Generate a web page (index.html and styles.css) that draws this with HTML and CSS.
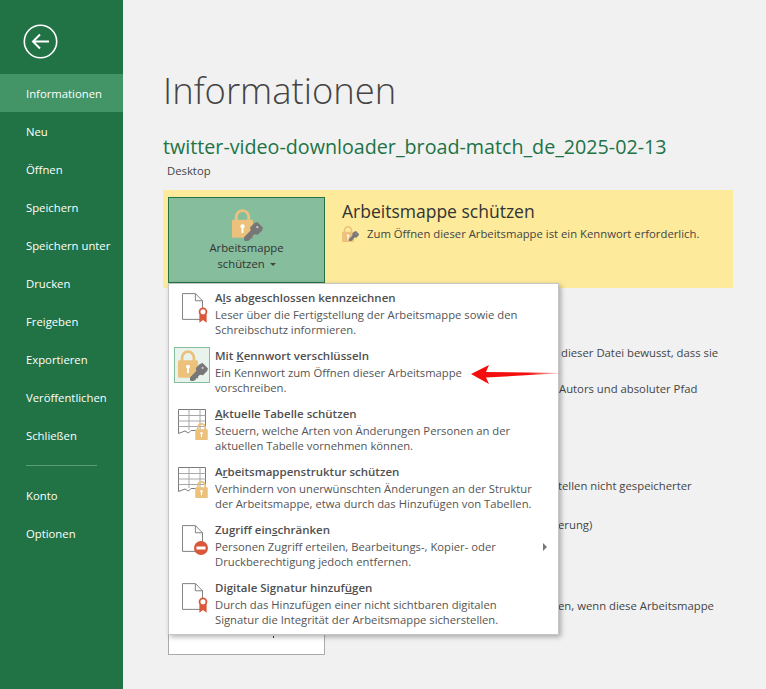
FILE: index.html
```html
<!DOCTYPE html>
<html>
<head>
  <title>Informationen</title>
  <link rel="stylesheet" href="styles.css">
</head>
<body>
  <svg class="defs" width="0" height="0">
    <symbol id="lock" viewBox="0 0 22 30">
      <path d="M4.5 12V8a6.5 6.5 0 0 1 13 0v4" fill="none" stroke="#ebc17b" stroke-width="3"/>
      <rect x="0" y="11" width="22" height="19" rx="1.5" fill="#ebc17b"/>
      <circle cx="11" cy="18" r="2.2" fill="#fff"/>
      <rect x="10" y="19" width="2" height="6" fill="#fff"/>
    </symbol>
    <symbol id="key" viewBox="0 0 20 20">
      <path d="M0 16 7 9 6.5 5.5 11 1 14 0 20 6 19 9 14.5 13.500 11 13 9 15 9 17 7 17 6 19 4 20 1 20 0 19Z" fill="#777"/>
      <circle cx="14" cy="5.500" r="1.200" fill="#ccc"/>
    </symbol>
    <symbol id="doc" viewBox="0 0 22 28">
      <path d="M.5.5H14L21.5 8V27.5H.5Z" fill="#fff" stroke="#7b7b7b"/>
      <path d="M14 .5V8H21.5" fill="none" stroke="#7b7b7b"/>
    </symbol>
    <symbol id="ribbon" viewBox="0 0 11 17">
      <path d="M1.5 8V17L5.5 14 9.5 17V8Z" fill="#d9583b"/>
      <circle cx="5.5" cy="5" r="3.8" fill="#fff" stroke="#d9583b" stroke-width="2"/>
    </symbol>
    <symbol id="sheet" viewBox="0 0 28 26">
      <path d="M.5 .5H27.5V21.5H13L10.5 24 7 22 .5 24.5Z" fill="#fff" stroke="#7b7b7b"/>
      <path d="M11 .5V21M22 .5V21M.5 6.5H27.5M.5 12H27.5M.5 17.5H27.5" fill="none" stroke="#a8a8a8"/>
    </symbol>
  </svg>

  <div class="app">
    <nav class="sidebar">
      <div class="back">
        <svg width="36" height="36" viewBox="0 0 36 36">
          <circle cx="17.5" cy="17.5" r="16.2" fill="none" stroke="#fff" stroke-width="1.6"/>
          <path d="M10 17.5H26M17 10.5 10 17.5 17 24.5" fill="none" stroke="#fff" stroke-width="2"/>
        </svg>
      </div>
      <ul class="nav-list nav-main">
        <li class="active">Informationen</li>
        <li>Neu</li>
        <li>Öffnen</li>
        <li>Speichern</li>
        <li>Speichern unter</li>
        <li>Drucken</li>
        <li>Freigeben</li>
        <li>Exportieren</li>
        <li>Veröffentlichen</li>
        <li>Schließen</li>
      </ul>
      <div class="nav-divider"></div>
      <ul class="nav-list">
        <li>Konto</li>
        <li>Optionen</li>
      </ul>
    </nav>

    <main class="content">
      <h1>Informationen</h1>
      <h2>twitter-video-downloader_broad-match_de_2025-02-13</h2>
      <div class="location">Desktop</div>

      <section class="banner">
        <div class="big-button active-button">
          <span class="big-icon">
            <svg class="big-lock" width="21" height="29"><use href="#lock"/></svg>
            <svg class="big-key" width="19" height="19"><use href="#key"/></svg>
          </span>
          <span>Arbeitsmappe<br>schützen <i class="caret"></i></span>
        </div>
        <div class="banner-text">
          <h3>Arbeitsmappe schützen</h3>
          <p>
            <span class="small-icon">
              <svg class="small-lock" width="12" height="16"><use href="#lock"/></svg>
              <svg class="small-key" width="10" height="10"><use href="#key"/></svg>
            </span>
            Zum Öffnen dieser Arbeitsmappe ist ein Kennwort erforderlich.
          </p>
        </div>
      </section>

      <section class="details details-a">
        <p>dieser Datei bewusst, dass sie</p>
        <p class="gap-19 shift-left">Autors und absoluter Pfad</p>
      </section>
      <section class="details details-b">
        <p class="shift-left-2">tellen nicht gespeicherter</p>
        <p class="gap-22 shift-left-2">erung)</p>
      </section>
      <section class="last-section">
        <div class="big-button plain-button"><i class="tick"></i></div>
        <p>en, wenn diese Arbeitsmappe</p>
      </section>
    </main>

    <div class="menu">
      <div class="menu-item">
        <span class="menu-icon">
          <svg class="icon-doc" width="21" height="27"><use href="#doc"/></svg>
          <svg class="icon-ribbon" width="10" height="16"><use href="#ribbon"/></svg>
        </span>
        <div class="menu-text">
          <strong>A<u>l</u>s abgeschlossen kennzeichnen</strong>
          <p>Leser über die Fertigstellung der Arbeitsmappe sowie den<br>Schreibschutz informieren.</p>
        </div>
      </div>
      <div class="menu-item">
        <span class="menu-icon selected">
          <svg class="icon-lock" width="20" height="28"><use href="#lock"/></svg>
          <svg class="icon-key" width="18" height="18"><use href="#key"/></svg>
        </span>
        <div class="menu-text">
          <strong>Mit <u>K</u>ennwort verschlüsseln</strong>
          <p>Ein Kennwort zum Öffnen dieser Arbeitsmappe<br>vorschreiben.</p>
        </div>
      </div>
      <div class="menu-item">
        <span class="menu-icon">
          <svg class="icon-sheet" width="28" height="26"><use href="#sheet"/></svg>
          <svg class="icon-sheet-lock" width="13" height="17"><use href="#lock"/></svg>
        </span>
        <div class="menu-text">
          <strong><u>A</u>ktuelle Tabelle schützen</strong>
          <p>Steuern, welche Arten von Änderungen Personen an der<br>aktuellen Tabelle vornehmen können.</p>
        </div>
      </div>
      <div class="menu-item">
        <span class="menu-icon">
          <svg class="icon-sheet" width="28" height="26"><use href="#sheet"/></svg>
          <svg class="icon-sheet-lock" width="13" height="17"><use href="#lock"/></svg>
        </span>
        <div class="menu-text">
          <strong>A<u>r</u>beitsmappenstruktur schützen</strong>
          <p>Verhindern von unerwünschten Änderungen an der Struktur<br>der Arbeitsmappe, etwa durch das Hinzufügen von Tabellen.</p>
        </div>
      </div>
      <div class="menu-item">
        <span class="menu-icon">
          <svg class="icon-doc" width="21" height="27"><use href="#doc"/></svg>
          <svg class="icon-stop" width="14" height="14" viewBox="0 0 14 14">
            <circle cx="7" cy="7" r="7" fill="#d9583b"/>
            <rect x="2.5" y="5.5" width="9" height="3" fill="#fff"/>
          </svg>
        </span>
        <div class="menu-text">
          <strong>Zugriff ein<u>s</u>chränken</strong>
          <p>Personen Zugriff erteilen, Bearbeitungs-, Kopier- oder<br>Druckberechtigung jedoch entfernen.</p>
        </div>
        <i class="submenu-arrow"></i>
      </div>
      <div class="menu-item">
        <span class="menu-icon">
          <svg class="icon-doc" width="21" height="27"><use href="#doc"/></svg>
          <svg class="icon-ribbon" width="10" height="16"><use href="#ribbon"/></svg>
        </span>
        <div class="menu-text">
          <strong>Digitale Signatur hinzuf<u>ü</u>gen</strong>
          <p>Durch das Hinzufügen einer nicht sichtbaren digitalen<br>Signatur die Integrität der Arbeitsmappe sicherstellen.</p>
        </div>
      </div>
    </div>

    <svg class="red-arrow" width="96" height="22" viewBox="0 0 96 22">
      <defs>
        <linearGradient id="fade" x1="0" x2="1" y1="0" y2="0">
          <stop offset="0.6" stop-color="#f40d0d"/>
          <stop offset="1" stop-color="#f40d0d" stop-opacity="0.1"/>
        </linearGradient>
      </defs>
      <path d="M1 11 19 2 16 9 95 10 16 14.5 19 21Z" fill="url(#fade)"/>
    </svg>
  </div>
</body>
</html>
```

FILE: styles.css
```css
html, body {
  margin: 0;
  padding: 0;
}
body {
  font-family: "Open Sans", "Noto Sans", sans-serif;
  color: #444;
  background-color: #f1f1f1;
  overflow: hidden;
}
.defs {
  position: absolute;
}
.app {
  position: relative;
  display: flex;
  width: 766px;
  height: 689px;
  overflow: hidden;
}

/* sidebar */
.sidebar {
  flex: 0 0 123px;
  background-color: #217346;
  color: #fff;
  font-size: 11.3px;
}
.back {
  height: 74px;
  padding: 24px 0 0 23px;
  box-sizing: border-box;
}
.nav-list {
  list-style: none;
  margin: 0;
  padding: 0;
}
.nav-list li {
  height: 38px;
  line-height: 38px;
  padding-left: 26px;
}
.nav-main li {
  line-height: 40px;
}
.nav-list li.active {
  background-color: #439467;
}
.nav-divider {
  width: 71px;
  height: 1px;
  margin: 11px 0 11px 26px;
  background-color: #5c9d79;
}

/* main column */
.content {
  flex: 1;
  padding-left: 40px;
}
h1 {
  margin: 67px 0 0 0;
  font-size: 36.4px;
  line-height: 46px;
  font-weight: 300;
  color: #444;
}
h2 {
  margin: 21px 0 0 0;
  font-size: 19.7px;
  line-height: 26px;
  font-weight: 400;
  color: #217346;
}
.location {
  margin: 3px 0 0 4px;
  font-size: 11.3px;
  line-height: 16px;
}
.banner {
  display: flex;
  width: 570px;
  height: 98px;
  margin-top: 11px;
  padding: 7px 0 0 5px;
  box-sizing: border-box;
  background-color: #fdea9b;
}
.big-button {
  flex: 0 0 157px;
  box-sizing: border-box;
  width: 157px;
  height: 86px;
  font-size: 11.3px;
  line-height: 16px;
  color: #333;
  text-align: center;
}
.active-button {
  background-color: #86bd9c;
  border: 1px solid #217346;
}
.big-icon {
  display: block;
  position: relative;
  height: 42px;
}
.big-lock {
  position: absolute;
  left: 63px;
  top: 11px;
}
.big-key {
  position: absolute;
  left: 75px;
  top: 24px;
}
.caret {
  display: inline-block;
  margin-left: 2px;
  vertical-align: middle;
  border: 3px solid transparent;
  border-top-color: #444;
  border-bottom: 0;
}
.banner-text {
  margin-left: 17px;
}
h3 {
  margin: 2px 0 0 0;
  font-size: 17.5px;
  line-height: 24px;
  font-weight: 400;
  color: #333;
}
.banner-text p {
  display: flex;
  align-items: center;
  margin: 3px 0 0 0;
  font-size: 11.3px;
  line-height: 16px;
}
.small-icon {
  position: relative;
  flex: 0 0 25px;
  height: 16px;
}
.small-lock {
  position: absolute;
  left: 0;
  top: 0;
}
.small-key {
  position: absolute;
  left: 7px;
  top: 5px;
}

/* text rows that stick out from under the menu */
.details {
  margin-left: 398px;
  font-size: 11.3px;
  line-height: 16px;
}
.details p,
.last-section p {
  margin: 0;
  white-space: nowrap;
}
.details-a {
  margin-top: 57px;
}
.details-b {
  margin-top: 81px;
}
.gap-19 {
  margin-top: 20px !important;
}
.gap-22 {
  margin-top: 23px !important;
}
.shift-left {
  margin-left: -2px !important;
}
.shift-left-2 {
  margin-left: -3px !important;
}
.last-section {
  display: flex;
  margin-top: 36px;
  margin-left: 5px;
  font-size: 11.3px;
  line-height: 16px;
}
.plain-button {
  position: relative;
  background-color: #fff;
  border: 1px solid #ababab;
}
.last-section p {
  margin: 29px 0 0 233px;
}
.tick {
  position: absolute;
  left: 104px;
  top: 66px;
  width: 1px;
  height: 2px;
  background-color: #333;
}

/* dropdown over the page */
.menu {
  position: absolute;
  left: 168px;
  top: 283px;
  box-sizing: border-box;
  width: 391px;
  height: 352px;
  padding-top: 5px;
  background-color: #fff;
  border: 1px solid #c6c6c6;
  box-shadow: 2px 2px 5px rgba(0,0,0,0.3);
}
.menu-item {
  position: relative;
  display: flex;
  height: 58px;
  font-size: 11.25px;
  line-height: 15px;
}
.menu-icon {
  position: relative;
  flex: 0 0 36px;
  height: 36px;
  margin-left: 5px;
  box-sizing: border-box;
}
.menu-icon.selected {
  background-color: #e8f3ec;
  border: 1px solid #86bd9c;
}
.menu-text {
  margin-left: 5px;
  width: 330px;
}
.menu-text strong {
  display: block;
  font-size: 11.5px;
  line-height: 17px;
  font-weight: 600;
  color: #505050;
}
.menu-text p {
  margin: 1px 0 0 0;
  color: #555;
}
.icon-doc {
  position: absolute;
  left: 8px;
  top: 4px;
}
.icon-ribbon {
  position: absolute;
  left: 24px;
  top: 18px;
}
.icon-stop {
  position: absolute;
  left: 20px;
  top: 20px;
}
.icon-lock {
  position: absolute;
  left: 3px;
  top: 2px;
}
.icon-key {
  position: absolute;
  left: 15px;
  top: 15px;
}
.icon-sheet {
  position: absolute;
  left: 4px;
  top: 4px;
}
.icon-sheet-lock {
  position: absolute;
  left: 21px;
  top: 18px;
}
.submenu-arrow {
  position: absolute;
  left: 374px;
  top: 22px;
  border: 4px solid transparent;
  border-left-color: #777;
  border-right: 0;
}
.red-arrow {
  position: absolute;
  left: 470px;
  top: 363px;
}
```
